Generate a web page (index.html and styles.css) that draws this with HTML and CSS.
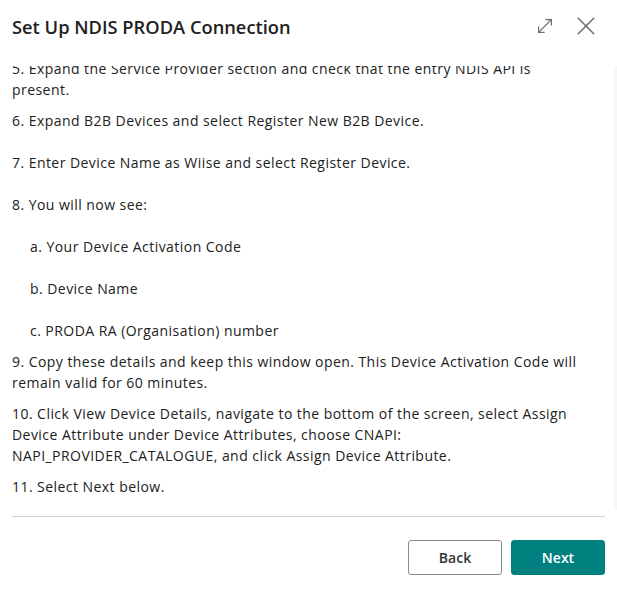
FILE: index.html
```html
<!DOCTYPE html>
<html lang="en">
<head>
<meta charset="utf-8">
<title>Set Up NDIS PRODA Connection</title>
<link rel="stylesheet" href="styles.css">
</head>
<body>
<div class="dialog">
  <header class="header">
    <h1 class="title">Set Up NDIS PRODA Connection</h1>
    <div class="actions">
      <button class="icon-btn expand" aria-label="Expand">
        <svg width="16" height="16" viewBox="0 0 16 16" fill="none" stroke="#6b6b6b" stroke-width="1.2" stroke-linecap="square">
          <path d="M1.6 14.4 L14.4 1.6"/>
          <path d="M9 1.6 H14.4 V7"/>
          <path d="M1.6 9 V14.4 H7"/>
        </svg>
      </button>
      <button class="icon-btn close" aria-label="Close">
        <svg width="18" height="18" viewBox="0 0 18 18" fill="none" stroke="#6b6b6b" stroke-width="1.5">
          <path d="M0.8 0.8 L17.2 17.2"/>
          <path d="M17.2 0.8 L0.8 17.2"/>
        </svg>
      </button>
    </div>
  </header>
  <div class="body">
    <div class="scroll">
      <div class="steps">
        <p class="step">5. Expand the Service Provider section and check that the entry NDIS API is<br>present.</p>
        <p class="step spaced">6. Expand B2B Devices and select Register New B2B Device.</p>
        <p class="step spaced">7. Enter Device Name as Wiise and select Register Device.</p>
        <p class="step spaced">8. You will now see:</p>
        <p class="step spaced sub">a. Your Device Activation Code</p>
        <p class="step spaced sub">b. Device Name</p>
        <p class="step sub">c. PRODA RA (Organisation) number</p>
        <p class="step">9. Copy these details and keep this window open. This Device Activation Code will remain valid for 60 minutes.</p>
        <p class="step">10. Click View Device Details, navigate to the bottom of the screen, select Assign Device Attribute under Device Attributes, choose CNAPI: NAPI_PROVIDER_CATALOGUE, and click Assign Device Attribute.</p>
        <p class="step">11. Select Next below.</p>
      </div>
    </div>
    <div class="track"></div>
  </div>
  <div class="divider"></div>
  <footer class="footer">
    <button class="btn secondary">Back</button>
    <button class="btn primary">Next</button>
  </footer>
</div>
</body>
</html>
```
FILE: styles.css
```css
* { box-sizing: border-box; }
html, body { margin: 0; padding: 0; background: #ffffff; }
body {
  font-family: "Open Sans", "Noto Sans", "Liberation Sans", sans-serif;
  color: #212121;
}
.dialog {
  width: 617px;
  height: 590px;
  display: flex;
  flex-direction: column;
}
.header {
  display: flex;
  align-items: center;
  justify-content: space-between;
  height: 52px;
  padding: 0 22px 0 12px;
  flex: none;
}
.title {
  margin: 0;
  font-size: 18.3px;
  font-weight: 600;
  color: #212121;
}
.actions {
  display: flex;
  align-items: center;
  gap: 24px;
}
.icon-btn {
  border: 0;
  background: none;
  padding: 0;
  display: flex;
  cursor: pointer;
}
.body {
  flex: 1;
  display: flex;
  min-height: 0;
  padding-top: 14px;
}
.scroll {
  flex: 1;
  overflow: hidden;
  padding-left: 12px;
  padding-right: 30px;
}
.steps {
  margin-top: -8px;
}
.track {
  width: 3px;
  margin: 0 0 6px 0;
  background: #f6f6f6;
  flex: none;
}
.step {
  margin: 0 0 10px 0;
  font-size: 14px;
  letter-spacing: 0.45px;
  line-height: 21px;
}
.step.spaced { margin-bottom: 21px; }
.step.sub { padding-left: 18px; }
.divider {
  height: 1px;
  background: #d2d2d2;
  margin: 0 12px;
  flex: none;
}
.footer {
  display: flex;
  justify-content: flex-end;
  gap: 9px;
  padding: 23px 12px 15px 12px;
  flex: none;
}
.btn {
  width: 94px;
  height: 35px;
  font-family: inherit;
  font-size: 14px;
  font-weight: 600;
  border-radius: 3px;
  cursor: pointer;
}
.secondary {
  background: #ffffff;
  border: 1px solid #8a8a8a;
  color: #333333;
}
.primary {
  background: #00807f;
  border: 1px solid #00807f;
  color: #ffffff;
}
```
